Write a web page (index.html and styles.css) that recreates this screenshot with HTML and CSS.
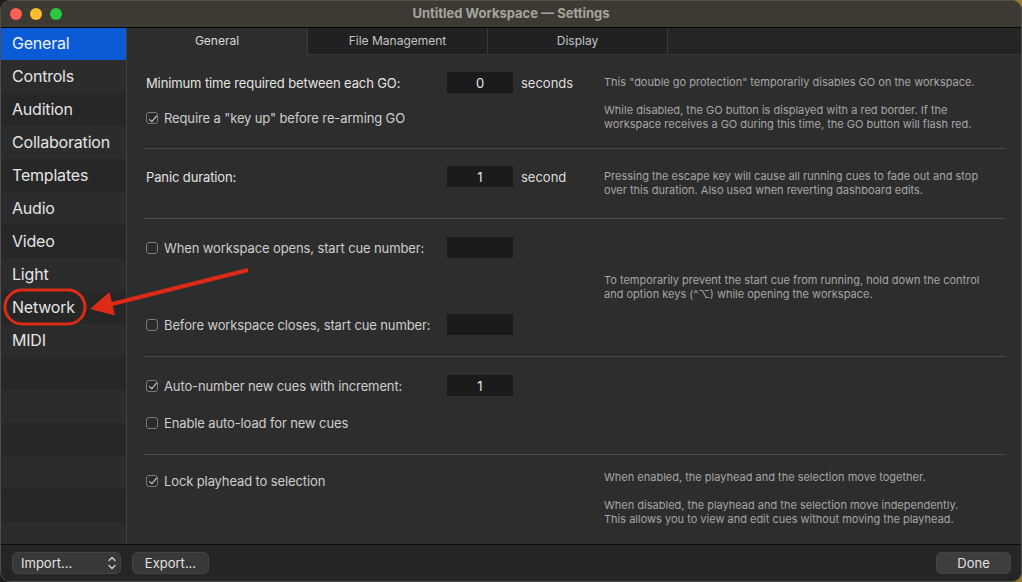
FILE: index.html
```html
<!DOCTYPE html>
<html>
<head>
<meta charset="utf-8">
<link rel="stylesheet" href="styles.css">
</head>
<body>
<div class="window">
  <div class="titlebar">
    <div class="lights"><span class="light red"></span><span class="light yellow"></span><span class="light green"></span></div>
    <div class="title">Untitled Workspace — Settings</div>
  </div>
  <div class="body">
    <nav class="sidebar">
      <div class="item selected">General</div>
      <div class="item">Controls</div>
      <div class="item">Audition</div>
      <div class="item">Collaboration</div>
      <div class="item">Templates</div>
      <div class="item">Audio</div>
      <div class="item">Video</div>
      <div class="item">Light</div>
      <div class="item">Network</div>
      <div class="item">MIDI</div>
      <div class="item"></div>
      <div class="item"></div>
      <div class="item"></div>
      <div class="item"></div>
      <div class="item"></div>
      <div class="item"></div>
    </nav>
    <main class="main">
      <div class="tabs">
        <div class="tab active">General</div>
        <div class="tab">File Management</div>
        <div class="tab">Display</div>
        <div class="tab fill"></div>
      </div>
      <div class="content">
        <section class="sec s1">
          <div class="left">
            <div class="row">
              <span class="lab strong">Minimum time required between each GO:</span>
              <span class="field">0</span>
              <span class="unit">seconds</span>
            </div>
            <div class="row r2">
              <span class="lab"><span class="check on"></span>Require a "key up" before re-arming GO</span>
            </div>
          </div>
          <div class="desc d1">
            <p>This "double go protection" temporarily disables GO on the workspace.</p>
            <p>While disabled, the GO button is displayed with a red border. If the<br>workspace receives a GO during this time, the GO button will flash red.</p>
          </div>
        </section>
        <section class="sec s2">
          <div class="left">
            <div class="row">
              <span class="lab strong">Panic duration:</span>
              <span class="field">1</span>
              <span class="unit">second</span>
            </div>
          </div>
          <div class="desc d2">
            <p>Pressing the escape key will cause all running cues to fade out and stop<br>over this duration. Also used when reverting dashboard edits.</p>
          </div>
        </section>
        <section class="sec s3">
          <div class="left">
            <div class="row">
              <span class="lab"><span class="check"></span>When workspace opens, start cue number:</span>
              <span class="field"></span>
            </div>
            <div class="row r3">
              <span class="lab"><span class="check"></span>Before workspace closes, start cue number:</span>
              <span class="field"></span>
            </div>
          </div>
          <div class="desc d3">
            <p>To temporarily prevent the start cue from running, hold down the control<br>and option keys (^⌥) while opening the workspace.</p>
          </div>
        </section>
        <section class="sec s4">
          <div class="left">
            <div class="row">
              <span class="lab"><span class="check on"></span>Auto-number new cues with increment:</span>
              <span class="field">1</span>
            </div>
            <div class="row r4">
              <span class="lab"><span class="check"></span>Enable auto-load for new cues</span>
            </div>
          </div>
        </section>
        <section class="sec s5">
          <div class="left">
            <div class="row">
              <span class="lab"><span class="check on"></span>Lock playhead to selection</span>
            </div>
          </div>
          <div class="desc d5">
            <p>When enabled, the playhead and the selection move together.</p>
            <p>When disabled, the playhead and the selection move independently.<br>This allows you to view and edit cues without moving the playhead.</p>
          </div>
        </section>
      </div>
    </main>
  </div>
  <div class="footer">
    <div class="btn popup">Import...
      <svg class="chev" width="8" height="14" viewBox="0 0 8 14"><path d="M1 4.5 L4 1.5 L7 4.5 M1 9.5 L4 12.5 L7 9.5" fill="none" stroke="#d8d8d8" stroke-width="1.3" stroke-linecap="round" stroke-linejoin="round"/></svg>
    </div>
    <div class="btn export">Export...</div>
    <div class="spacer"></div>
    <div class="btn done">Done</div>
  </div>
  <svg class="annot" width="1022" height="582" viewBox="0 0 1022 582">
    <rect x="5" y="290" width="80" height="34" rx="17" ry="17" fill="none" stroke="#dc2b17" stroke-width="3"/>
    <line x1="248" y1="270" x2="108" y2="305" stroke="#dc2b17" stroke-width="4"/>
    <polygon points="90,309 109.5,292 115,315.5" fill="#dc2b17"/>
  </svg>
</div>
</body>
</html>
```

FILE: styles.css
```css
* { box-sizing: border-box; }
html, body { margin: 0; padding: 0; }
body {
  width: 1022px;
  height: 582px;
  background: linear-gradient(to right, #1c1c1c 0%, #3a3222 60%, #9a7a30 100%);
  font-family: Inter, "Noto Sans", "Liberation Sans", sans-serif;
  overflow: hidden;
}
p { margin: 0; }

.window {
  position: relative;
  width: 1022px;
  height: 582px;
  border: 1px solid #4e4e4e;
  border-radius: 10px;
  overflow: hidden;
  display: flex;
  flex-direction: column;
  background: #2d2d2d;
}

.titlebar {
  height: 27px;
  flex: none;
  background: #3d3a34;
  border-bottom: 1px solid #050505;
  display: flex;
  align-items: center;
  position: relative;
}
.lights {
  display: flex;
  gap: 8px;
  padding-left: 9px;
}
.light {
  width: 12px;
  height: 12px;
  border-radius: 50%;
  display: block;
}
.red { background: #fe5f57; }
.yellow { background: #febc2e; }
.green { background: #28c840; }
.title {
  position: absolute;
  left: 0;
  right: 0;
  top: 0;
  bottom: 0;
  display: flex;
  align-items: center;
  justify-content: center;
  font-size: 13px;
  font-weight: 700;
  color: #a6a39d;
  padding-bottom: 2px;
}

.body {
  flex: 1;
  display: flex;
  min-height: 0;
}

.sidebar {
  width: 126px;
  flex: none;
  border-right: 1px solid #414141;
  overflow: hidden;
  margin-top: -1px;
}
.item {
  height: 33px;
  display: flex;
  align-items: center;
  padding-left: 11px;
  padding-bottom: 2px;
  font-size: 16px;
  letter-spacing: -0.2px;
  color: #e4e4e4;
  background: #272727;
}
.item:nth-child(even) { background: #2c2c2c; }
.item.selected { background: #0b5bd6; color: #f2f2f2; }

.main {
  flex: 1;
  display: flex;
  flex-direction: column;
  min-width: 0;
  margin-top: -1px;
}
.tabs {
  height: 28px;
  flex: none;
  display: flex;
}
.tab {
  width: 180px;
  flex: none;
  display: flex;
  align-items: center;
  justify-content: center;
  font-size: 12px;
  color: #c4c4c4;
  background: #212121;
  border-left: 1px solid #3a3a3a;
  box-shadow: inset 0 -1px 0 #363636;
  padding-bottom: 1px;
}
.tab.active {
  width: 180px;
  background: #2d2d2d;
  border-left: none;
  box-shadow: none;
  color: #dadada;
}
.tab.fill {
  flex: 1;
  width: auto;
  background: linear-gradient(to bottom, #262626, #232323);
}

.content {
  flex: 1;
  padding: 0 16px;
  display: flex;
  flex-direction: column;
}
.sec {
  display: flex;
  align-items: flex-start;
  padding-left: 3px;
  border-bottom: 1px solid #4a4a4a;
  flex: none;
}
.s1 { height: 94px; padding-top: 17px; }
.s2 { height: 70px; padding-top: 17px; }
.s3 { height: 138px; padding-top: 18px; }
.s4 { height: 98px; padding-top: 18px; }
.s5 { flex: 1; border-bottom: none; padding-top: 15px; }

.left {
  width: 458px;
  flex: none;
}
.row {
  height: 21px;
  display: flex;
  align-items: center;
}
.r2 { margin-top: 14px; height: 22px; }
.r3 { margin-top: 56px; }
.r4 { margin-top: 16px; }

.lab {
  width: 301px;
  flex: none;
  display: flex;
  align-items: center;
  font-size: 13px;
  letter-spacing: -0.12px;
  color: #cdcdcd;
  white-space: nowrap;
}
.lab.strong { color: #e3e3e3; }
.check {
  width: 12px;
  height: 12px;
  border: 1px solid #7a7a7a;
  border-radius: 3px;
  margin-right: 6px;
  flex: none;
  position: relative;
  background: #2a2a2a;
}
.check.on::after {
  content: "";
  position: absolute;
  left: 3.5px;
  top: 0.5px;
  width: 3px;
  height: 7px;
  border-right: 1.4px solid #dcdcdc;
  border-bottom: 1.4px solid #dcdcdc;
  transform: rotate(40deg);
}
.field {
  width: 66px;
  height: 21px;
  flex: none;
  background: #1b1b1b;
  color: #e8e8e8;
  font-size: 13px;
  display: flex;
  align-items: center;
  justify-content: center;
}
.unit {
  margin-left: 8px;
  font-size: 13px;
  color: #dedede;
}

.desc {
  font-size: 11px;
  line-height: 14px;
  color: #a6a6a6;
  white-space: nowrap;
}
.desc p + p { margin-top: 14px; }
.d1 { margin-top: 3px; }
.d2 { margin-top: 3px; }
.d3 { margin-top: 36px; }
.d5 { margin-top: 0; }

.footer {
  height: 37px;
  flex: none;
  border-top: 1px solid #0e0e0e;
  background: #252525;
  display: flex;
  align-items: flex-start;
  padding: 7px 10px 0 11px;
}
.btn {
  height: 22px;
  border-radius: 5px;
  background: #383838;
  border: 1px solid #444;
  color: #e2e2e2;
  font-size: 13px;
  display: flex;
  align-items: center;
  justify-content: center;
  padding-bottom: 1px;
}
.popup {
  width: 109px;
  justify-content: space-between;
  padding: 0 4px 1px 8px;
}
.export {
  width: 77px;
  margin-left: 11px;
}
.spacer { flex: 1; }
.done {
  width: 75px;
  background: #3e3e3e;
}

.annot {
  position: absolute;
  left: -1px;
  top: -1px;
  pointer-events: none;
}
```
